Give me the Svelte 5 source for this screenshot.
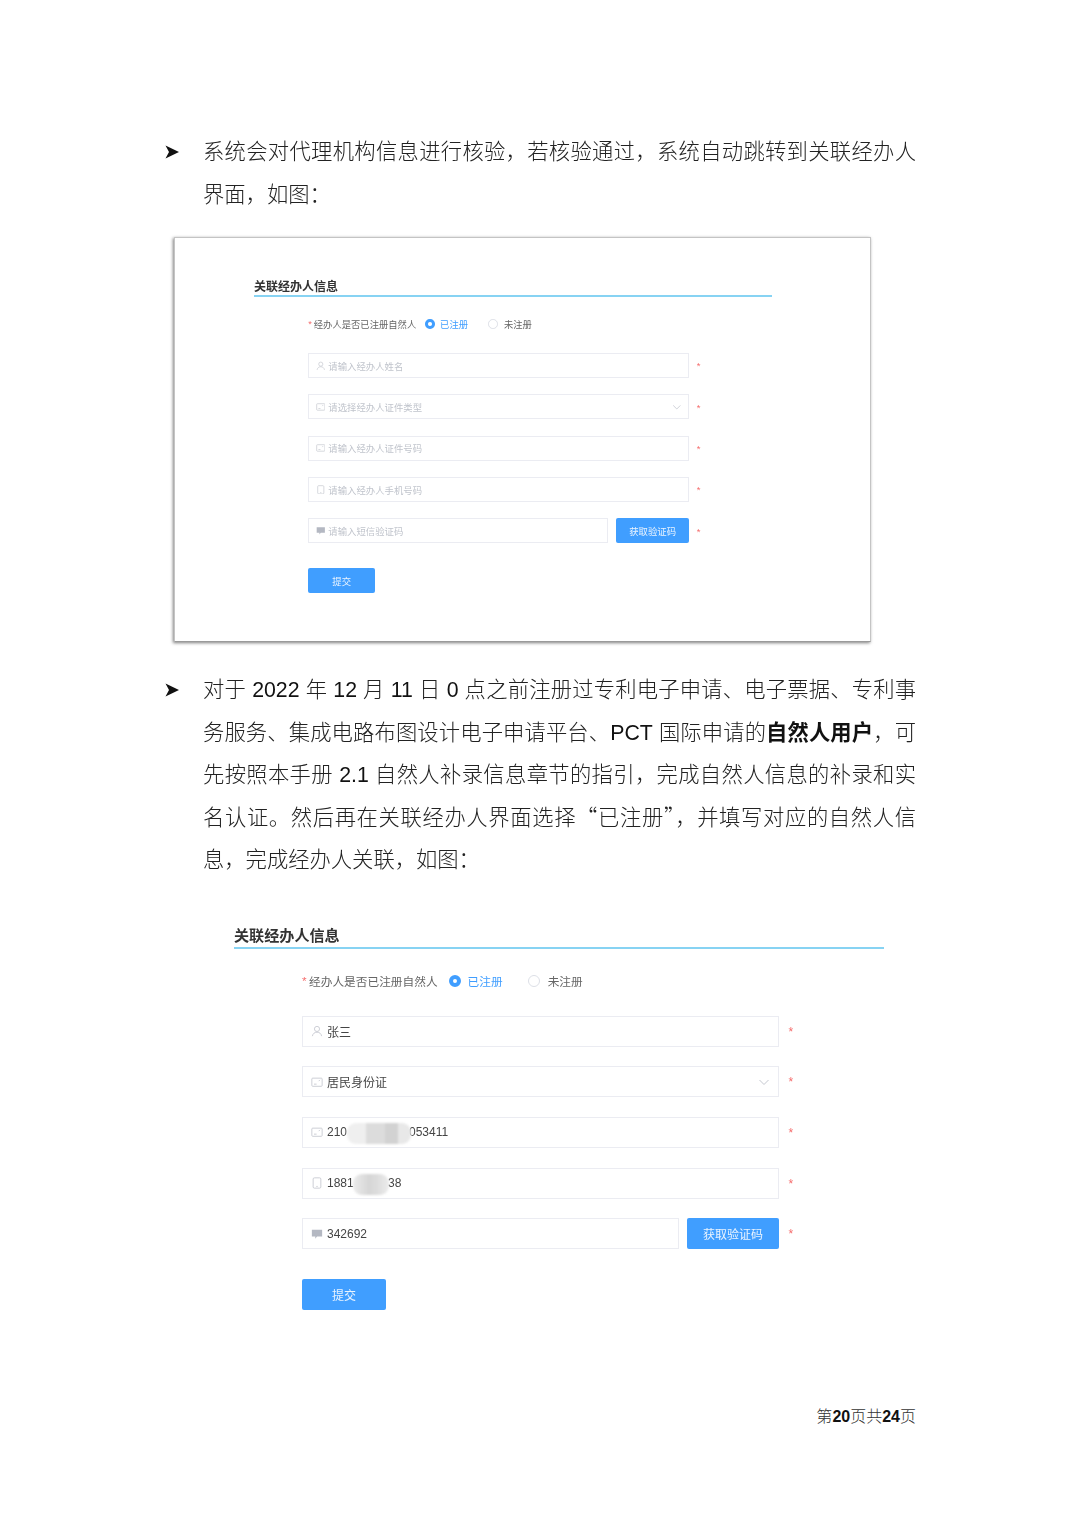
<script>
	const blank = [
		{ icon: 'user', text: '请输入经办人姓名' },
		{ icon: 'card', text: '请选择经办人证件类型', select: true },
		{ icon: 'card', text: '请输入经办人证件号码' },
		{ icon: 'phone', text: '请输入经办人手机号码' },
		{ icon: 'chat', text: '请输入短信验证码', code: true }
	];

	const filled = [
		{ icon: 'user', text: '张三' },
		{ icon: 'card', text: '居民身份证', select: true },
		{ icon: 'card', text: '210', tail: '053411', mask: 'mask-id' },
		{ icon: 'phone', text: '1881', tail: '38', mask: 'mask-phone' },
		{ icon: 'chat', text: '342692', code: true }
	];
</script>

{#snippet glyph(name)}
	<svg class="glyph" viewBox="0 0 14 14" fill="none" stroke="#c4c7cf" stroke-width="1">
		{#if name === 'user'}
			<circle cx="7" cy="4.600" r="3" />
			<path d="M1.600 13c.5-3 2.600-4.600 5.400-4.600s4.900 1.600 5.400 4.600" />
		{:else if name === 'card'}
			<rect x="1" y="2.500" width="12" height="9.500" rx="1" />
			<path d="M3.500 9.500h3M9 6l1.500-1.500" />
		{:else if name === 'phone'}
			<rect x="2.500" y="1" width="9" height="12" rx="1.400" />
			<path d="M6.200 11h1.600" />
		{:else}
			<path d="M1 2h12v8H7l-2 2.400V10H1z" fill="#b4b8c2" stroke="none" />
		{/if}
	</svg>
{/snippet}

{#snippet form(rows, muted)}
	<h3 class="title">关联经办人信息</h3>
	<div class="indent">
		<div class="radios">
			<span class="star">*</span><span class="question">经办人是否已注册自然人</span>
			<span class="radio on"></span><span class="on-label">已注册</span>
			<span class="radio off"></span><span class="off-label">未注册</span>
		</div>
		{#each rows as row}
			<div class="row">
				<div class="field" class:short={row.code} class:muted>
					{@render glyph(row.icon)}
					<span class="value">{row.text}</span>
					{#if row.tail}<span class="value tail" class:tail-id={row.mask === 'mask-id'} class:tail-phone={row.mask === 'mask-phone'}>{row.tail}</span>{/if}
					{#if row.mask}<span class="mask {row.mask}"></span>{/if}
					{#if row.select}
						<svg class="chevron" viewBox="0 0 12 12" fill="none" stroke="#c4c7cf" stroke-width="1"><path d="M1.500 4l4.500 4.500L10.500 4" /></svg>
					{/if}
				</div>
				{#if row.code}<button class="btn code">获取验证码</button>{/if}
				<span class="req">*</span>
			</div>
		{/each}
		<button class="btn submit">提交</button>
	</div>
{/snippet}

{#snippet bullet()}
	<svg class="arrow" viewBox="0 0 14 14"><path d="M0.500 0.500L14 7L0.500 13.500L4 7Z" fill="#111" /></svg>
{/snippet}

<div class="page">
	<div class="para">
		{@render bullet()}
		<div class="line">系统会对代理机构信息进行核验&#65292;若核验通过&#65292;系统自动跳转到关联经办人</div>
		<div class="line last">界面&#65292;如图&#65306;</div>
	</div>

	<div class="card">
		<div class="form small">
			{@render form(blank, true)}
		</div>
	</div>

	<div class="para second">
		{@render bullet()}
		<div class="line">对于 <i>2022</i> 年 <i>12</i> 月 <i>11</i> 日 <i>0</i> 点之前注册过专利电子申请、电子票据、专利事</div>
		<div class="line">务服务、集成电路布图设计电子申请平台、<i>PCT</i> 国际申请的<b>自然人用户</b>&#65292;可</div>
		<div class="line">先按照本手册 <i>2.1</i> 自然人补录信息章节的指引&#65292;完成自然人信息的补录和实</div>
		<div class="line">名认证。然后再在关联经办人界面选择<span class="q">“</span>已注册<span class="q">”</span>&#65292;并填写对应的自然人信</div>
		<div class="line last">息&#65292;完成经办人关联&#65292;如图&#65306;</div>
	</div>

	<div class="form large">
		{@render form(filled, false)}
	</div>

	<div class="footer">第<b>20</b>页共<b>24</b>页</div>
</div>

<style>
	:global(body) {
		margin: 0;
		background: #fff;
	}

	.page {
		box-sizing: border-box;
		width: 1080px;
		min-height: 1527px;
		padding: 131px 164px 0 203px;
		font-family: 'Liberation Sans', 'Noto Sans CJK SC', sans-serif;
		color: #222;
	}

	.para {
		position: relative;
		font-size: 21.300px;
		line-height: 42.500px;
		font-weight: 300;
		filter: blur(0.3px);
	}

	.second {
		margin-top: 27px;
	}

	.line {
		height: 42.500px;
		text-align: justify;
		text-align-last: justify;
		white-space: nowrap;
	}

	.line.last {
		text-align-last: left;
	}

	.line i {
		font-style: normal;
		font-weight: 400;
		color: #111;
	}

	.line b {
		font-weight: 700;
		color: #111;
	}

	.q {
		font-family: 'Noto Sans CJK SC', sans-serif;
		line-height: 1;
	}

	.arrow {
		position: absolute;
		left: -38px;
		top: 14px;
		width: 14px;
		height: 14px;
	}

	.card {
		box-sizing: border-box;
		width: 697px;
		height: 405px;
		margin: 21px 0 0 -29px;
		padding: 40px 0 0 79px;
		background: #fff;
		border: 1px solid #c4c4c4;
		border-bottom-color: #9a9a9a;
		box-shadow: -1px 1px 3px rgba(0, 0, 0, 0.5);
	}

	.form {
		filter: blur(0.6px);
	}

	.small {
		--s: 0.797;
	}

	.large {
		--s: 1;
		margin: 44px 0 0 31px;
	}

	.title {
		width: calc(650px * var(--s));
		margin: 0;
		height: calc(20px * var(--s));
		line-height: calc(20px * var(--s));
		font-size: calc(15.100px * var(--s));
		font-weight: 700;
		color: #333;
		border-bottom: 2px solid #87d3f3;
		box-sizing: content-box;
		padding-bottom: calc(1px * var(--s));
	}

	.small .title {
		line-height: 19px;
	}

	.indent {
		margin-left: calc(68px * var(--s));
	}

	.radios {
		display: flex;
		align-items: center;
		height: calc(20px * var(--s));
		margin-top: 22px;
		margin-bottom: 25px;
		font-size: calc(11.700px * var(--s));
		color: #666;
	}

	.small .radios {
		margin-top: 19.500px;
		margin-bottom: 21px;
	}

	.star {
		width: calc(7px * var(--s));
		color: #f56c6c;
	}

	.radio {
		box-sizing: border-box;
		flex: none;
		width: calc(12px * var(--s));
		height: calc(12px * var(--s));
		border-radius: 50%;
	}

	.radio.on {
		margin-left: calc(11px * var(--s));
		border: calc(4px * var(--s)) solid #409eff;
		background: #fff;
	}

	.radio.off {
		margin-left: calc(25px * var(--s));
		border: 1px solid #dcdfe6;
	}

	.on-label {
		margin-left: calc(7px * var(--s));
		color: #409eff;
	}

	.off-label {
		margin-left: calc(8px * var(--s));
	}

	.row {
		display: flex;
		align-items: center;
		height: 31px;
		margin-bottom: 19.700px;
	}

	.small .row {
		height: 25px;
		margin-bottom: 16.300px;
	}

	.field {
		position: relative;
		box-sizing: border-box;
		display: flex;
		align-items: center;
		flex: none;
		width: 477px;
		height: 100%;
		padding-left: calc(8px * var(--s));
		border: 1.500px solid #ebecf2;
		font-size: 12px;
		color: #444;
	}

	.small .field {
		width: 381px;
		font-size: 9.400px;
	}

	.field.short {
		width: 377px;
	}

	.small .field.short {
		width: 300px;
	}

	.field.muted {
		color: #c0c4cc;
	}

	.glyph {
		flex: none;
		width: calc(12px * var(--s));
		height: calc(12px * var(--s));
		margin-right: calc(4px * var(--s));
	}

	.tail {
		position: absolute;
	}

	.tail-id {
		left: 106px;
	}

	.tail-phone {
		left: 85px;
	}

	/* smudge over the redacted digits */
	.mask {
		position: absolute;
		top: 5px;
		bottom: 3px;
		border-radius: 9px;
		background: linear-gradient(90deg, #efefef 0 30%, #dcdcdc 30% 60%, #d2d2d2 60% 80%, #e8e8e8 80%);
		filter: blur(0.8px);
	}

	.mask-id {
		left: 44px;
		width: 64px;
	}

	.mask-phone {
		left: 50px;
		width: 36px;
		background: linear-gradient(90deg, #ececec, #d6d6d6 45%, #dedede 70%, #ececec);
	}

	.chevron {
		position: absolute;
		right: calc(8px * var(--s));
		top: 50%;
		width: calc(12px * var(--s));
		height: calc(12px * var(--s));
		transform: translateY(-50%);
	}

	.btn {
		box-sizing: border-box;
		border: 0;
		border-radius: 2px;
		padding: 0;
		background: #409eff;
		color: #eaf4ff;
		font-family: inherit;
		font-size: 12px;
	}

	.small .btn {
		font-size: 9.400px;
	}

	.code {
		flex: none;
		width: 92px;
		height: 100%;
		margin-left: 8px;
	}

	.small .code {
		width: 73px;
	}

	.req {
		margin-left: calc(9.500px * var(--s));
		padding-top: 1px;
		font-size: calc(12px * var(--s));
		line-height: 1;
		color: #f56c6c;
	}

	.submit {
		display: block;
		width: 84px;
		height: 31px;
		margin-top: 30px;
	}

	.small .submit {
		width: 67px;
		height: 25px;
		margin-top: 25px;
	}

	.footer {
		margin-top: 97px;
		text-align: right;
		font-size: 16px;
		line-height: 20px;
		font-weight: 300;
		color: #333;
	}

	.footer b {
		font-weight: 700;
		color: #111;
	}
</style>
